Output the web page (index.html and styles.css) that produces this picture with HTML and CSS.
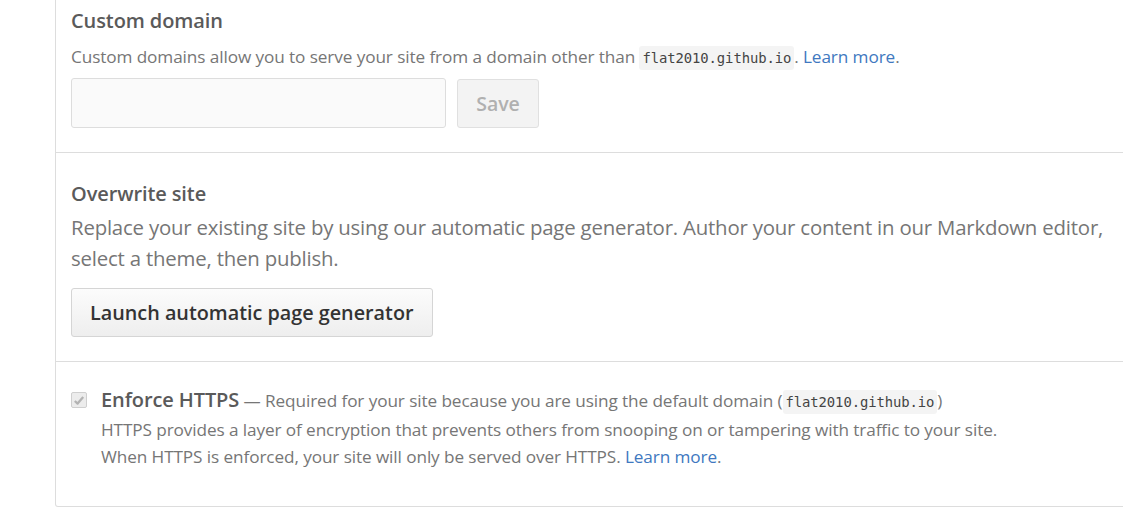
FILE: index.html
```html
<!DOCTYPE html>
<html>
<head>
<meta charset="utf-8">
<link rel="stylesheet" href="styles.css">
</head>
<body>
<div class="box">
  <section class="row row-domain">
    <h3 class="title">Custom domain</h3>
    <p class="note">Custom domains allow you to serve your site from a domain other than <code>flat2010.github.io</code>. <a href="#">Learn more</a>.</p>
    <form class="domain-form">
      <input class="domain-input" type="text">
      <button class="btn btn-disabled" type="button" disabled>Save</button>
    </form>
  </section>
  <section class="row row-overwrite">
    <h3 class="title">Overwrite site</h3>
    <p class="lead">Replace your existing site by using our automatic page generator. Author your content in our Markdown editor, select a theme, then publish.</p>
    <button class="btn btn-launch" type="button">Launch automatic page generator</button>
  </section>
  <section class="row row-https">
    <div class="check-line">
      <span class="checkbox" aria-hidden="true">
        <svg width="12" height="11" viewBox="0 0 12 11"><path d="M1.8 6 L4.6 8.6 L10.2 2" fill="none" stroke="#b3b3b3" stroke-width="2.3" stroke-linejoin="round"/></svg>
      </span>
      <div class="check-text">
        <p class="check-main"><strong class="check-label">Enforce HTTPS</strong> — Required for your site because you are using the default domain (<code>flat2010.github.io</code>)</p>
        <p class="note">HTTPS provides a layer of encryption that prevents others from snooping on or tampering with traffic to your site.<br>When HTTPS is enforced, your site will only be served over HTTPS. <a href="#">Learn more</a>.</p>
      </div>
    </div>
  </section>
</div>
</body>
</html>
```
FILE: styles.css
```css
html, body {
  margin: 0;
  padding: 0;
  background: #fff;
  overflow: hidden;
}
body {
  padding-left: 55px;
  font-family: "Open Sans", "Noto Sans", sans-serif;
  color: #767676;
}
.box {
  width: 1100px;
  border: 1px solid #ddd;
  border-top: none;
  border-radius: 0 0 3px 3px;
}
.row {
  padding: 0 15px;
  border-top: 1px solid #ddd;
}
.row:first-child {
  border-top: none;
}
.title {
  margin: 0;
  font-size: 20px;
  font-weight: 600;
  color: #5a5a5a;
  line-height: 24px;
  letter-spacing: -0.1px;
}
.note {
  margin: 0;
  font-size: 17.2px;
  line-height: 27px;
  color: #767676;
  letter-spacing: -0.1px;
}
code {
  font-family: "DejaVu Sans Mono", monospace;
  font-size: 13.9px;
  background: #f4f4f4;
  border-radius: 3px;
  padding: 4px 3px;
  color: #444;
}
a {
  color: #4078c0;
  text-decoration: none;
}
.row-domain {
  padding-top: 9px;
  padding-bottom: 24px;
}
.row-domain .note {
  margin-top: 10px;
}
.domain-form {
  display: flex;
  gap: 11px;
  margin-top: 6px;
}
.domain-input {
  width: 375px;
  height: 50px;
  box-sizing: border-box;
  background: #fafafa;
  border: 1px solid #ddd;
  border-radius: 3px;
}
.btn {
  font-family: "Open Sans", "Noto Sans", sans-serif;
  font-weight: 600;
  border-radius: 3px;
  box-sizing: border-box;
}
.btn-disabled {
  width: 82px;
  height: 49px;
  font-size: 19.5px;
  background: #f3f3f3;
  border: 1px solid #e0e0e0;
  color: #b0b0b0;
  margin-top: 1px;
}
.row-overwrite {
  padding-top: 29px;
  padding-bottom: 24px;
}
.lead {
  margin: 6px 0 14px;
  font-size: 20.4px;
  line-height: 31px;
  color: #767676;
  letter-spacing: -0.2px;
}
.btn-launch {
  height: 49px;
  padding: 0 18px;
  font-size: 19.8px;
  color: #333;
  background: linear-gradient(#fcfcfc, #eeeeee);
  border: 1px solid #d5d5d5;
  display: block;
}
.row-https {
  padding-top: 25px;
  padding-bottom: 36px;
}
.check-line {
  display: flex;
  gap: 14px;
}
.checkbox {
  flex: none;
  width: 14px;
  height: 14px;
  margin-top: 5px;
  border: 1px solid #cfcfcf;
  border-radius: 2px;
  background: #ececec;
  display: flex;
  align-items: center;
  justify-content: center;
}
.check-main {
  margin: 0;
  font-size: 17.2px;
  line-height: 27px;
  letter-spacing: -0.1px;
}
.check-label {
  font-size: 20px;
  line-height: 22px;
  font-weight: 600;
  color: #5a5a5a;
}
```
